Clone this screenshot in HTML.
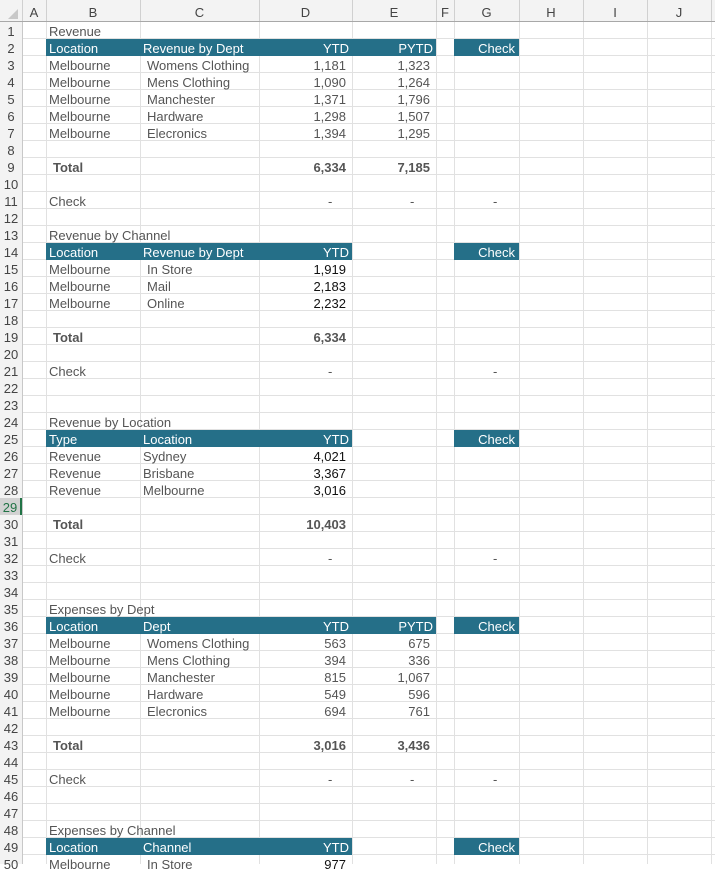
<!DOCTYPE html><html><head><style>
body{margin:0;width:715px;height:864px;overflow:hidden;background:#fff;font-family:"Liberation Sans",Arial,sans-serif;font-size:13px;color:#555;position:relative}
.g{position:absolute;left:0;top:22px;width:715px;height:842px;background:repeating-linear-gradient(to bottom,transparent 0,transparent 16px,#e1e1e1 16px,#e1e1e1 17px)}
.v{position:absolute;top:0;width:1px;height:864px;background:#e1e1e1}
.hdr{position:absolute;left:0;top:0;width:715px;height:21px;background:#f3f3f3;border-bottom:1px solid #a8a8a8}
.rh{position:absolute;left:0;top:22px;width:22px;height:842px;background:#f3f3f3;border-right:1px solid #c8c8c8}
.ch{position:absolute;top:0;height:21px;line-height:26px;text-align:center;color:#444;font-size:13px}
.cs{position:absolute;top:0;width:1px;height:21px;background:#d0d0d0}
.n{position:absolute;left:0;width:22px;text-align:center;height:17px;line-height:19px;color:#444;font-size:13px}
.t{position:absolute;height:17px;line-height:20px;white-space:nowrap}
.bar{position:absolute;height:17px;background:#256f88}
.w{color:#fff}
.r{text-align:right}
.k{color:#111}
.bo{font-weight:bold}
</style></head><body>
<div class="g"></div>
<div class="v" style="left:46px"></div><div class="v" style="left:140px"></div><div class="v" style="left:259px"></div><div class="v" style="left:352px"></div><div class="v" style="left:436px"></div><div class="v" style="left:454px"></div><div class="v" style="left:519px"></div><div class="v" style="left:583px"></div><div class="v" style="left:647px"></div><div class="v" style="left:711px"></div>
<div class="hdr"></div>
<div style="position:absolute;left:8px;top:9px;width:0;height:0;border-left:10px solid transparent;border-bottom:10px solid #c8c8c8"></div>
<div class="cs" style="left:22px"></div><div class="cs" style="left:46px"></div><div class="cs" style="left:140px"></div><div class="cs" style="left:259px"></div><div class="cs" style="left:352px"></div><div class="cs" style="left:436px"></div><div class="cs" style="left:454px"></div><div class="cs" style="left:519px"></div><div class="cs" style="left:583px"></div><div class="cs" style="left:647px"></div><div class="cs" style="left:711px"></div>
<div class="ch" style="left:22px;width:24px">A</div><div class="ch" style="left:46px;width:94px">B</div><div class="ch" style="left:140px;width:119px">C</div><div class="ch" style="left:259px;width:93px">D</div><div class="ch" style="left:352px;width:84px">E</div><div class="ch" style="left:436px;width:18px">F</div><div class="ch" style="left:454px;width:65px">G</div><div class="ch" style="left:519px;width:64px">H</div><div class="ch" style="left:583px;width:64px">I</div><div class="ch" style="left:647px;width:64px">J</div>
<div class="rh"></div>
<div class="n" style="top:22px">1</div><div class="n" style="top:39px">2</div><div class="n" style="top:56px">3</div><div class="n" style="top:73px">4</div><div class="n" style="top:90px">5</div><div class="n" style="top:107px">6</div><div class="n" style="top:124px">7</div><div class="n" style="top:141px">8</div><div class="n" style="top:158px">9</div><div class="n" style="top:175px">10</div><div class="n" style="top:192px">11</div><div class="n" style="top:209px">12</div><div class="n" style="top:226px">13</div><div class="n" style="top:243px">14</div><div class="n" style="top:260px">15</div><div class="n" style="top:277px">16</div><div class="n" style="top:294px">17</div><div class="n" style="top:311px">18</div><div class="n" style="top:328px">19</div><div class="n" style="top:345px">20</div><div class="n" style="top:362px">21</div><div class="n" style="top:379px">22</div><div class="n" style="top:396px">23</div><div class="n" style="top:413px">24</div><div class="n" style="top:430px">25</div><div class="n" style="top:447px">26</div><div class="n" style="top:464px">27</div><div class="n" style="top:481px">28</div><div class="n" style="top:498px;color:#217346;background:#d2d2d2;border-right:2px solid #217346;width:20px">29</div><div class="n" style="top:515px">30</div><div class="n" style="top:532px">31</div><div class="n" style="top:549px">32</div><div class="n" style="top:566px">33</div><div class="n" style="top:583px">34</div><div class="n" style="top:600px">35</div><div class="n" style="top:617px">36</div><div class="n" style="top:634px">37</div><div class="n" style="top:651px">38</div><div class="n" style="top:668px">39</div><div class="n" style="top:685px">40</div><div class="n" style="top:702px">41</div><div class="n" style="top:719px">42</div><div class="n" style="top:736px">43</div><div class="n" style="top:753px">44</div><div class="n" style="top:770px">45</div><div class="n" style="top:787px">46</div><div class="n" style="top:804px">47</div><div class="n" style="top:821px">48</div><div class="n" style="top:838px">49</div><div class="n" style="top:855px">50</div>

<div class="t" style="left:49px;top:22px">Revenue</div>
<div class="bar" style="left:46px;width:390px;top:39px"></div><div class="bar" style="left:454px;width:65px;top:39px"></div>
<div class="t w" style="left:49px;top:39px">Location</div><div class="t w" style="left:143px;top:39px">Revenue by Dept</div><div class="t w r" style="left:259px;width:90px;top:39px">YTD</div><div class="t w r" style="left:352px;width:81px;top:39px">PYTD</div><div class="t w r" style="left:454px;width:61px;top:39px">Check</div>
<div class="t" style="left:49px;top:56px">Melbourne</div><div class="t" style="left:147px;top:56px">Womens Clothing</div><div class="t r" style="left:259px;width:87px;top:56px">1,181</div><div class="t r" style="left:352px;width:78px;top:56px">1,323</div>
<div class="t" style="left:49px;top:73px">Melbourne</div><div class="t" style="left:147px;top:73px">Mens Clothing</div><div class="t r" style="left:259px;width:87px;top:73px">1,090</div><div class="t r" style="left:352px;width:78px;top:73px">1,264</div>
<div class="t" style="left:49px;top:90px">Melbourne</div><div class="t" style="left:147px;top:90px">Manchester</div><div class="t r" style="left:259px;width:87px;top:90px">1,371</div><div class="t r" style="left:352px;width:78px;top:90px">1,796</div>
<div class="t" style="left:49px;top:107px">Melbourne</div><div class="t" style="left:147px;top:107px">Hardware</div><div class="t r" style="left:259px;width:87px;top:107px">1,298</div><div class="t r" style="left:352px;width:78px;top:107px">1,507</div>
<div class="t" style="left:49px;top:124px">Melbourne</div><div class="t" style="left:147px;top:124px">Elecronics</div><div class="t r" style="left:259px;width:87px;top:124px">1,394</div><div class="t r" style="left:352px;width:78px;top:124px">1,295</div>
<div class="t bo" style="left:53px;top:158px">Total</div><div class="t bo r" style="left:259px;width:87px;top:158px">6,334</div><div class="t bo r" style="left:352px;width:78px;top:158px">7,185</div>
<div class="t" style="left:49px;top:192px">Check</div><div class="t" style="left:328px;top:192px">-</div><div class="t" style="left:410px;top:192px">-</div><div class="t" style="left:493px;top:192px">-</div>

<div class="t" style="left:49px;top:226px">Revenue by Channel</div>
<div class="bar" style="left:46px;width:306px;top:243px"></div><div class="bar" style="left:454px;width:65px;top:243px"></div>
<div class="t w" style="left:49px;top:243px">Location</div><div class="t w" style="left:143px;top:243px">Revenue by Dept</div><div class="t w r" style="left:259px;width:90px;top:243px">YTD</div><div class="t w r" style="left:454px;width:61px;top:243px">Check</div>
<div class="t" style="left:49px;top:260px">Melbourne</div><div class="t" style="left:147px;top:260px">In Store</div><div class="t r k" style="left:259px;width:87px;top:260px">1,919</div>
<div class="t" style="left:49px;top:277px">Melbourne</div><div class="t" style="left:147px;top:277px">Mail</div><div class="t r k" style="left:259px;width:87px;top:277px">2,183</div>
<div class="t" style="left:49px;top:294px">Melbourne</div><div class="t" style="left:147px;top:294px">Online</div><div class="t r k" style="left:259px;width:87px;top:294px">2,232</div>
<div class="t bo" style="left:53px;top:328px">Total</div><div class="t bo r" style="left:259px;width:87px;top:328px">6,334</div>
<div class="t" style="left:49px;top:362px">Check</div><div class="t" style="left:328px;top:362px">-</div><div class="t" style="left:493px;top:362px">-</div>

<div class="t" style="left:49px;top:413px">Revenue by Location</div>
<div class="bar" style="left:46px;width:306px;top:430px"></div><div class="bar" style="left:454px;width:65px;top:430px"></div>
<div class="t w" style="left:49px;top:430px">Type</div><div class="t w" style="left:143px;top:430px">Location</div><div class="t w r" style="left:259px;width:90px;top:430px">YTD</div><div class="t w r" style="left:454px;width:61px;top:430px">Check</div>
<div class="t" style="left:49px;top:447px">Revenue</div><div class="t" style="left:143px;top:447px">Sydney</div><div class="t r k" style="left:259px;width:87px;top:447px">4,021</div>
<div class="t" style="left:49px;top:464px">Revenue</div><div class="t" style="left:143px;top:464px">Brisbane</div><div class="t r k" style="left:259px;width:87px;top:464px">3,367</div>
<div class="t" style="left:49px;top:481px">Revenue</div><div class="t" style="left:143px;top:481px">Melbourne</div><div class="t r k" style="left:259px;width:87px;top:481px">3,016</div>
<div class="t bo" style="left:53px;top:515px">Total</div><div class="t bo r" style="left:259px;width:87px;top:515px">10,403</div>
<div class="t" style="left:49px;top:549px">Check</div><div class="t" style="left:328px;top:549px">-</div><div class="t" style="left:493px;top:549px">-</div>

<div class="t" style="left:49px;top:600px">Expenses by Dept</div>
<div class="bar" style="left:46px;width:390px;top:617px"></div><div class="bar" style="left:454px;width:65px;top:617px"></div>
<div class="t w" style="left:49px;top:617px">Location</div><div class="t w" style="left:143px;top:617px">Dept</div><div class="t w r" style="left:259px;width:90px;top:617px">YTD</div><div class="t w r" style="left:352px;width:81px;top:617px">PYTD</div><div class="t w r" style="left:454px;width:61px;top:617px">Check</div>
<div class="t" style="left:49px;top:634px">Melbourne</div><div class="t" style="left:147px;top:634px">Womens Clothing</div><div class="t r" style="left:259px;width:87px;top:634px">563</div><div class="t r" style="left:352px;width:78px;top:634px">675</div>
<div class="t" style="left:49px;top:651px">Melbourne</div><div class="t" style="left:147px;top:651px">Mens Clothing</div><div class="t r" style="left:259px;width:87px;top:651px">394</div><div class="t r" style="left:352px;width:78px;top:651px">336</div>
<div class="t" style="left:49px;top:668px">Melbourne</div><div class="t" style="left:147px;top:668px">Manchester</div><div class="t r" style="left:259px;width:87px;top:668px">815</div><div class="t r" style="left:352px;width:78px;top:668px">1,067</div>
<div class="t" style="left:49px;top:685px">Melbourne</div><div class="t" style="left:147px;top:685px">Hardware</div><div class="t r" style="left:259px;width:87px;top:685px">549</div><div class="t r" style="left:352px;width:78px;top:685px">596</div>
<div class="t" style="left:49px;top:702px">Melbourne</div><div class="t" style="left:147px;top:702px">Elecronics</div><div class="t r" style="left:259px;width:87px;top:702px">694</div><div class="t r" style="left:352px;width:78px;top:702px">761</div>
<div class="t bo" style="left:53px;top:736px">Total</div><div class="t bo r" style="left:259px;width:87px;top:736px">3,016</div><div class="t bo r" style="left:352px;width:78px;top:736px">3,436</div>
<div class="t" style="left:49px;top:770px">Check</div><div class="t" style="left:328px;top:770px">-</div><div class="t" style="left:410px;top:770px">-</div><div class="t" style="left:493px;top:770px">-</div>

<div class="t" style="left:49px;top:821px">Expenses by Channel</div>
<div class="bar" style="left:46px;width:306px;top:838px"></div><div class="bar" style="left:454px;width:65px;top:838px"></div>
<div class="t w" style="left:49px;top:838px">Location</div><div class="t w" style="left:143px;top:838px">Channel</div><div class="t w r" style="left:259px;width:90px;top:838px">YTD</div><div class="t w r" style="left:454px;width:61px;top:838px">Check</div>
<div class="t" style="left:49px;top:855px">Melbourne</div><div class="t" style="left:147px;top:855px">In Store</div><div class="t r k" style="left:259px;width:87px;top:855px">977</div>
</body></html>
